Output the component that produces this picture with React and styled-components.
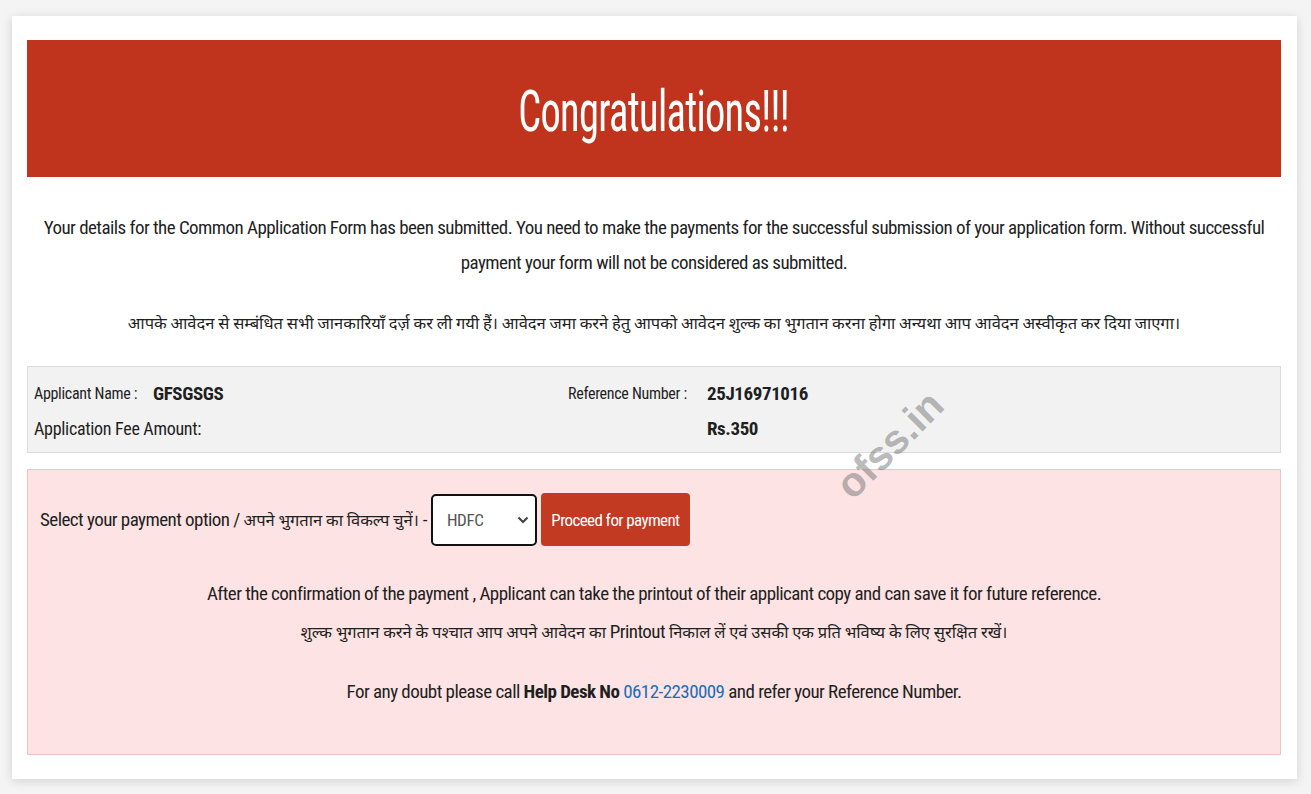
import React from "react";
import styled, { createGlobalStyle } from "styled-components";

const FONT = `"Roboto Condensed", "Liberation Sans Narrow", "Arial Narrow", "Noto Sans", "Noto Sans Devanagari", sans-serif`;

const Global = createGlobalStyle`
  html, body { margin: 0; padding: 0; background: #f4f4f4; }
  body { font-family: ${FONT}; font-stretch: condensed; color: #1f1f1f; }
  * { box-sizing: border-box; }
`;

const Page = styled.div`
  padding: 16px 14px 16px 12px;
  min-height: 794px;
`;

const Card = styled.div`
  position: relative;
  background: #fff;
  box-shadow: 0 2px 10px rgba(0, 0, 0, 0.14);
  padding: 24px 16px 24px 15px;
`;

const Header = styled.div`
  height: 137px;
  padding-top: 6px;
  background: #c0341d;
  display: flex;
  align-items: center;
  justify-content: center;
`;

const Title = styled.h1`
  margin: 0;
  color: #fff;
  font-weight: 400;
  font-size: 57px;
  letter-spacing: -1px;
  transform: scaleX(0.71);
`;

const Hi = styled.span`
  font-size: ${(p) => p.$size || 16.5}px;
  letter-spacing: 0;
`;

const Para = styled.p`
  margin: ${(p) => p.$mt || 0}px 0 0;
  text-align: center;
  font-size: 19px;
  letter-spacing: -0.55px;
  line-height: 35px;
  padding: 0 4px;
`;

const InfoBox = styled.div`
  margin-top: 25px;
  background: #f2f2f2;
  border: 1px solid #dcdcdc;
  padding: 9px 6px 6px;
  display: grid;
  grid-template-columns: 119px 415px 139px 1fr;
  grid-auto-rows: 35px;
  align-items: center;
`;

const Label = styled.div`
  font-size: ${(p) => p.$size || 16}px;
  letter-spacing: -0.3px;
  grid-column: ${(p) => p.$span || "auto"};
`;

const Value = styled.div`
  font-size: 19px;
  font-weight: 700;
  letter-spacing: -0.4px;
  grid-column: ${(p) => p.$col || "auto"};
`;

const PayBox = styled.div`
  margin-top: 16px;
  background: #fde3e3;
  border: 1px solid #efc4c4;
  padding: 23px 12px 45px;
`;

const SelectRow = styled.div`
  display: flex;
  align-items: center;
  gap: 4px;
  font-size: 19px;
  letter-spacing: -0.55px;
`;

const SelectWrap = styled.div`
  position: relative;
  width: 106px;
  height: 52px;
`;

const Select = styled.select`
  appearance: none;
  width: 100%;
  height: 100%;
  border: 2px solid #111;
  border-radius: 5px;
  background: #fff;
  font-family: ${FONT};
  font-stretch: condensed;
  font-size: 17px;
  letter-spacing: -0.4px;
  color: #555;
  padding: 0 0 0 14px;
`;

const Chevron = styled.svg`
  position: absolute;
  right: 8px;
  top: 21px;
  pointer-events: none;
`;

const Button = styled.button`
  height: 53px;
  width: 149px;
  padding: 0;
  background: #c23a22;
  color: #fff;
  border: none;
  border-radius: 4px;
  font-family: ${FONT};
  font-stretch: condensed;
  font-size: 17px;
  letter-spacing: -0.6px;
`;

const Note = styled.p`
  margin: ${(p) => p.$mt || 0}px 0 0;
  text-align: center;
  font-size: 19px;
  letter-spacing: -0.55px;
  line-height: ${(p) => p.$lh || 35}px;
`;

const Strong = styled.b`
  font-weight: 700;
`;

const Phone = styled.span`
  color: #1c6db5;
`;

const Watermark = styled.div`
  position: absolute;
  left: 878px;
  top: 429px;
  transform: translate(-50%, -50%) rotate(-45deg);
  font-family: "Liberation Sans", Arial, sans-serif;
  font-weight: 700;
  font-size: 41px;
  line-height: 1;
  color: rgba(110, 110, 110, 0.48);
  pointer-events: none;
`;

export default function App() {
  return (
    <>
      <Global />
      <Page>
        <Card>
          <Header>
            <Title>Congratulations!!!</Title>
          </Header>
          <Para $mt={33}>
            Your details for the Common Application Form has been submitted. You need to make the payments for the successful submission of your application form. Without successful payment your form will not be considered as submitted.
          </Para>
          <Para $mt={25}>
            <Hi>
              आपके आवेदन से सम्बंधित सभी जानकारियाँ दर्ज़ कर ली गयी हैं। आवेदन जमा करने हेतु आपको आवेदन शुल्क का भुगतान करना होगा अन्यथा आप आवेदन अस्वीकृत कर दिया जाएगा।
            </Hi>
          </Para>
          <InfoBox>
            <Label>Applicant Name :</Label>
            <Value>GFSGSGS</Value>
            <Label>Reference Number :</Label>
            <Value>25J16971016</Value>
            <Label $span="1 / 4" $size={18}>Application Fee Amount:</Label>
            <Value $col="4">Rs.350</Value>
          </InfoBox>
          <PayBox>
            <SelectRow>
              <span>
                Select your payment option / <Hi>अपने भुगतान का विकल्प चुनें।</Hi> -
              </span>
              <SelectWrap>
                <Select defaultValue="HDFC">
                  <option>HDFC</option>
                </Select>
                <Chevron width="12" height="10" viewBox="0 0 12 10">
                  <path d="M1.5 2.5 L6 7 L10.5 2.5" fill="none" stroke="#444" strokeWidth="2.2" />
                </Chevron>
              </SelectWrap>
              <Button>Proceed for payment</Button>
            </SelectRow>
            <Note $mt={30}>
              After the confirmation of the payment , Applicant can take the printout of their applicant copy and can save it for future reference.
            </Note>
            <Note $lh={41}>
              <Hi>शुल्क भुगतान करने के पश्चात आप अपने आवेदन का</Hi> Printout <Hi>निकाल लें एवं उसकी एक प्रति भविष्य के लिए सुरक्षित रखें।</Hi>
            </Note>
            <Note $mt={21}>
              For any doubt please call <Strong>Help Desk No</Strong> <Phone>0612-2230009</Phone> and refer your Reference Number.
            </Note>
          </PayBox>
          <Watermark>ofss.in</Watermark>
        </Card>
      </Page>
    </>
  );
}
